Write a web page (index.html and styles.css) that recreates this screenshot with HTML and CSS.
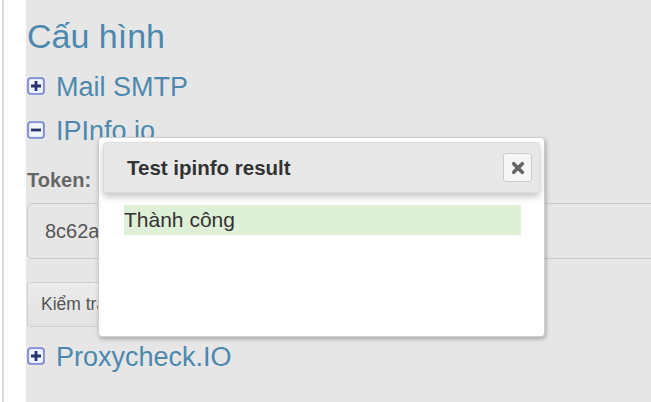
FILE: index.html
```html
<!DOCTYPE html>
<html lang="vi">
<head>
<meta charset="utf-8">
<title>Cấu hình</title>
<link rel="stylesheet" href="styles.css">
</head>
<body>
<div class="page">
  <div class="rail"></div>
  <main class="main">
    <h1 class="title">Cấu hình</h1>

    <div class="section">
      <svg class="toggle" viewBox="0 0 18 18"><rect x="1" y="1" width="16" height="16" rx="3" fill="#e2e6fb" stroke="#7380d2" stroke-width="1.6"/><rect x="3" y="3" width="12" height="12" rx="1.5" fill="#f3f5ff"/><path d="M4 9h10M9 4v10" stroke="#26336f" stroke-width="2.8"/></svg>
      <span class="section-name">Mail SMTP</span>
    </div>

    <div class="section">
      <svg class="toggle" viewBox="0 0 18 18"><rect x="1" y="1" width="16" height="16" rx="3" fill="#e2e6fb" stroke="#7380d2" stroke-width="1.6"/><rect x="3" y="3" width="12" height="12" rx="1.5" fill="#f3f5ff"/><path d="M4 9h10" stroke="#26336f" stroke-width="2.8"/></svg>
      <span class="section-name">IPInfo.io</span>
    </div>

    <label class="field-label">Token:</label>
    <div class="input">8c62a1f</div>
    <div class="btn">Kiểm tra</div>

    <div class="section section-last">
      <svg class="toggle" viewBox="0 0 18 18"><rect x="1" y="1" width="16" height="16" rx="3" fill="#e2e6fb" stroke="#7380d2" stroke-width="1.6"/><rect x="3" y="3" width="12" height="12" rx="1.5" fill="#f3f5ff"/><path d="M4 9h10M9 4v10" stroke="#26336f" stroke-width="2.8"/></svg>
      <span class="section-name">Proxycheck.IO</span>
    </div>
  </main>
</div>

<div class="dialog">
  <div class="dialog-bar">
    <span class="dialog-title">Test ipinfo result</span>
    <button class="dialog-close" type="button" aria-label="close">
      <svg class="close-icon" viewBox="0 0 13 13"><path d="M2.5 2.5l8 8M10.5 2.5l-8 8" stroke="#666666" stroke-width="3.4" stroke-linecap="round"/></svg>
    </button>
  </div>
  <div class="dialog-body">
    <div class="result-ok">Thành công</div>
  </div>
</div>
</body>
</html>
```

FILE: styles.css
```css
html, body {
  margin: 0;
  padding: 0;
  height: 100%;
  overflow: hidden;
  font-family: "Liberation Sans", Arial, sans-serif;
}

.page {
  display: flex;
  height: 402px;
  background: #ffffff;
}

.rail {
  width: 22px;
  margin-left: 2px;
  border-left: 2px solid #d9d9d9;
  background: #ffffff;
  flex: none;
}

.main {
  flex: 1;
  background: #e6e6e6;
  padding: 16px 0 0 1px;
  overflow: hidden;
  display: flex;
  flex-direction: column;
  align-items: flex-start;
}

.title {
  margin: 0;
  font-size: 34px;
  line-height: 40px;
  font-weight: normal;
  color: #4d89ae;
}

.section {
  display: flex;
  align-items: flex-start;
  gap: 11px;
  margin-top: 16px;
  font-size: 27px;
  line-height: 30px;
  color: #4d89ae;
}

.section + .section {
  margin-top: 14px;
}

.toggle {
  flex: 0 0 18px;
  display: block;
  width: 18px;
  height: 18px;
  margin-top: 5px;
}

.section-last {
  margin-top: 15px;
}

.field-label {
  margin-top: 22px;
  font-size: 20px;
  line-height: 24px;
  font-weight: bold;
  color: #666666;
}

.input {
  margin-top: 11px;
  width: 700px;
  height: 54px;
  box-sizing: content-box;
  border: 1px solid #cccccc;
  border-radius: 5px;
  padding: 0 0 0 17px;
  font-size: 20px;
  line-height: 54px;
  color: #555555;
  white-space: nowrap;
}

.btn {
  margin-top: 23px;
  height: 43px;
  border: 1px solid #d0d0d0;
  border-radius: 4px;
  padding: 0 40px 0 13px;
  background: linear-gradient(#ececec, #e2e2e2);
  font-size: 17.5px;
  line-height: 43px;
  color: #555555;
}

.dialog {
  position: absolute;
  left: 98px;
  top: 137px;
  width: 437px;
  height: 190px;
  background: #ffffff;
  border: 1px solid #cfcfcf;
  border-radius: 4px;
  box-shadow: 1px 2px 4px rgba(0, 0, 0, 0.28);
  padding: 4px;
  box-sizing: content-box;
  display: flex;
  flex-direction: column;
}

.dialog-bar {
  height: 49px;
  border: 1px solid #dddddd;
  border-radius: 4px;
  background: #e8e8e8;
  box-shadow: 0 4px 7px rgba(0, 0, 0, 0.22);
  display: flex;
  align-items: center;
  justify-content: space-between;
  padding: 0 7px 0 23px;
  width: 405px;
  box-sizing: content-box;
  flex: none;
}

.dialog-title {
  font-size: 20.5px;
  font-weight: bold;
  color: #333333;
}

.dialog-close {
  width: 29px;
  height: 29px;
  margin: 0;
  padding: 0;
  border: 1px solid #cccccc;
  border-radius: 3px;
  background: #f6f6f6;
  display: flex;
  align-items: center;
  justify-content: center;
}

.close-icon {
  display: block;
  width: 14px;
  height: 14px;
}

.dialog-body {
  padding: 12px 19px 0 21px;
}

.result-ok {
  background: #dff0d8;
  color: #333333;
  font-size: 21px;
  line-height: 30px;
  height: 30px;
}
```
